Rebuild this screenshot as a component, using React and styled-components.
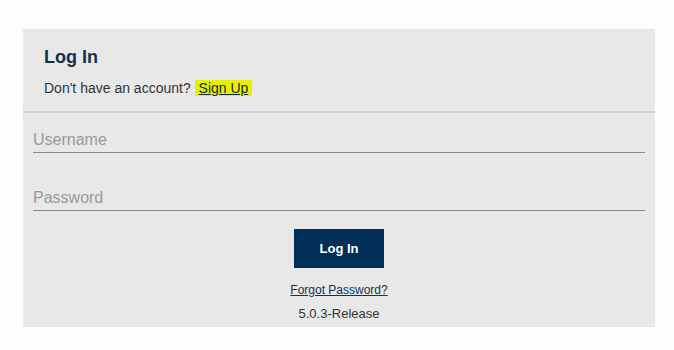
import React from 'react'
import styled, { createGlobalStyle } from 'styled-components';

const GlobalStyle = createGlobalStyle`
  body {
    margin: 0;
    background: #fdfdfd;
    font-family: "Liberation Sans", Arial, sans-serif;
  }
`;

const Page = styled.div`
  padding: 29px 0 0 23px;
`;

const Panel = styled.div`
  width: 632px;
  background: #e8e8e8;
  padding-bottom: 5px;
`;

const Header = styled.div`
  padding: 17px 21px 15px;
  border-bottom: 2px solid #cfcfcf;
`;

const Title = styled.h4`
  margin: 0;
  font-size: 18px;
  line-height: 22px;
  font-weight: bold;
  color: #15304f;
`;

const Subtitle = styled.p`
  margin: 12px 0 0;
  font-size: 14px;
  line-height: 16px;
  color: #333;
`;

const SignUp = styled.a`
  background: #e6f000;
  color: #1a2a3a;
  text-decoration: underline;
  padding: 0 4px;
  cursor: pointer;
`;

const Form = styled.form`
  display: flex;
  flex-direction: column;
  align-items: center;
  padding: 14px 10px 0;
`;

const Field = styled.input`
  box-sizing: border-box;
  width: 100%;
  height: 26px;
  margin: ${({ first }) => (first ? '0' : '32px 0 0')};
  padding: 0;
  border: none;
  border-bottom: 1px solid #8a8a8a;
  background: transparent;
  font-family: "Liberation Sans", Arial, sans-serif;
  font-size: 16px;
  color: #333;
  outline: none;
  &::placeholder { color: #999; }
`;

const Button = styled.button`
  margin-top: 18px;
  width: 90px;
  height: 39px;
  border: none;
  background: #003057;
  color: #fff;
  font-family: "Liberation Sans", Arial, sans-serif;
  font-size: 13px;
  font-weight: bold;
  cursor: pointer;
`;

const Forgot = styled.a`
  margin-top: 14px;
  font-size: 12px;
  line-height: 16px;
  color: #15304f;
  text-decoration: underline;
  cursor: pointer;
`;

const Version = styled.div`
  margin-top: 8px;
  font-size: 13px;
  line-height: 16px;
  color: #333;
`;

export default function App() {
  return (
    <>
      <GlobalStyle />
      <Page>
        <Panel>
          <Header>
            <Title>Log In</Title>
            <Subtitle>
              Don't have an account? <SignUp>Sign Up</SignUp>
            </Subtitle>
          </Header>
          <Form onSubmit={e => e.preventDefault()}>
            <Field first placeholder="Username" />
            <Field type="password" placeholder="Password" autoFocus />
            <Button type="submit">Log In</Button>
            <Forgot>Forgot Password?</Forgot>
            <Version>5.0.3-Release</Version>
          </Form>
        </Panel>
      </Page>
    </>
  )
}
